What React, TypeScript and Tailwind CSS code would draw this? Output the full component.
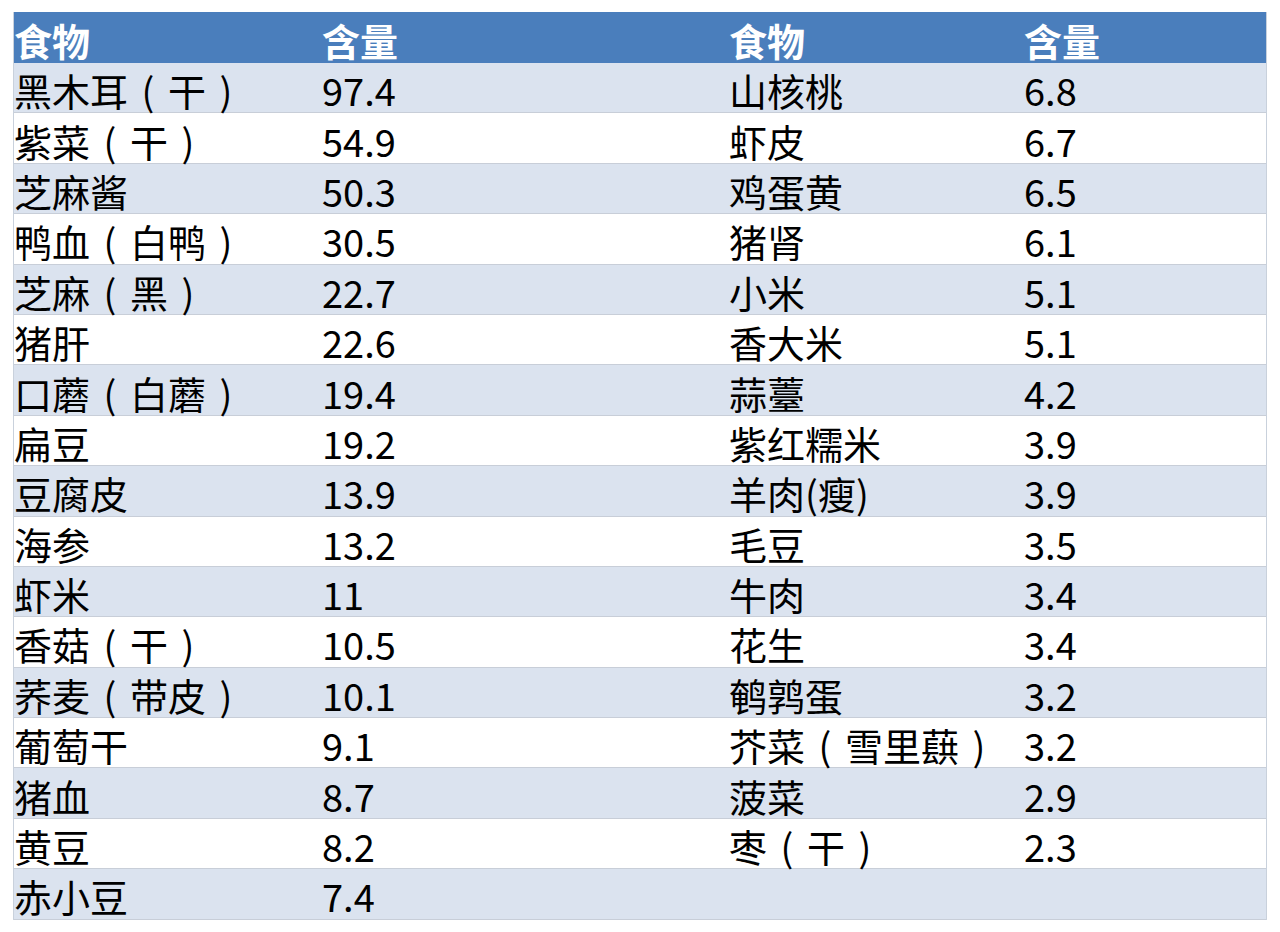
const left: [string, string][] = [
  ["黑木耳（干）", "97.4"],
  ["紫菜（干）", "54.9"],
  ["芝麻酱", "50.3"],
  ["鸭血（白鸭）", "30.5"],
  ["芝麻（黑）", "22.7"],
  ["猪肝", "22.6"],
  ["口蘑（白蘑）", "19.4"],
  ["扁豆", "19.2"],
  ["豆腐皮", "13.9"],
  ["海参", "13.2"],
  ["虾米", "11"],
  ["香菇（干）", "10.5"],
  ["荞麦（带皮）", "10.1"],
  ["葡萄干", "9.1"],
  ["猪血", "8.7"],
  ["黄豆", "8.2"],
  ["赤小豆", "7.4"],
]

const right: [string, string][] = [
  ["山核桃", "6.8"],
  ["虾皮", "6.7"],
  ["鸡蛋黄", "6.5"],
  ["猪肾", "6.1"],
  ["小米", "5.1"],
  ["香大米", "5.1"],
  ["蒜薹", "4.2"],
  ["紫红糯米", "3.9"],
  ["羊肉(瘦)", "3.9"],
  ["毛豆", "3.5"],
  ["牛肉", "3.4"],
  ["花生", "3.4"],
  ["鹌鹑蛋", "3.2"],
  ["芥菜（雪里蕻）", "3.2"],
  ["菠菜", "2.9"],
  ["枣（干）", "2.3"],
  ["", ""],
]

const cell = "flex items-center h-full pt-[5px] leading-none whitespace-nowrap"

// full-width brackets sit centred in their box in the source table
function Name({ text }: { text: string }) {
  return (
    <>
      {Array.from(text).map((ch, i) =>
        ch === "（" || ch === "）" ? (
          <span key={i} className="inline-block w-[1.05em] text-center">
            {ch === "（" ? "(" : ")"}
          </span>
        ) : (
          <span key={i}>{ch}</span>
        )
      )}
    </>
  )
}

export default function App() {
  return (
    <div
      className="w-[1280px] h-[932px] bg-white pt-[12px] pl-[13px] text-[38px] text-black"
      style={{ fontFamily: '"Noto Sans CJK SC", "Noto Sans", sans-serif' }}
    >
      <div className="w-[1254px] border-x border-[#c9d1dc]">
        <div className="grid grid-cols-[308px_405px_297px_1fr] h-[51px] bg-[#4a7ebc] text-white font-bold text-[38px]">
          <div className={`${cell} pt-[2px]`}>食物</div>
          <div className={`${cell} pt-[2px]`}>含量</div>
          <div className={`${cell} pt-[2px] pl-[2px]`}>食物</div>
          <div className={`${cell} pt-[2px]`}>含量</div>
        </div>
        {left.map((l, i) => {
          const r = right[i]
          return (
            <div
              key={i}
              className={`grid grid-cols-[308px_405px_297px_1fr] h-[50.4px] border-b border-[#c8ced8] ${
                i % 2 === 0 ? "bg-[#dbe3ef]" : "bg-white"
              }`}
            >
              <div className={cell}>
                <Name text={l[0]} />
              </div>
              <div className={cell}>{l[1]}</div>
              <div className={`${cell} pl-[2px]`}>
                <Name text={r[0]} />
              </div>
              <div className={cell}>{r[1]}</div>
            </div>
          )
        })}
      </div>
    </div>
  )
}
